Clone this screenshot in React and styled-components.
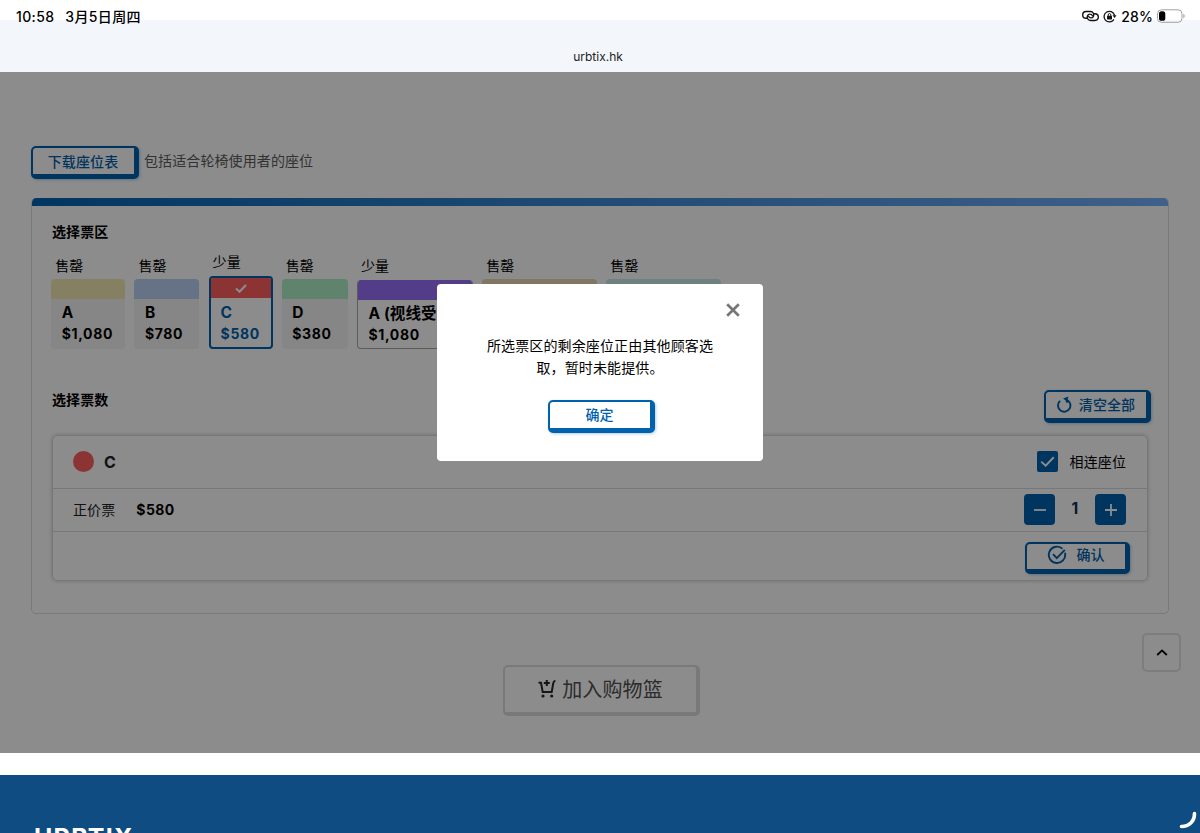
import React from "react";
import styled, { createGlobalStyle } from "styled-components";

const zones = [
   { name: "A", price: "$1,080", status: "售罄", color: "#f4e9b4", width: 74 },
   { name: "B", price: "$780", status: "售罄", color: "#bbd2f4", width: 65 },
   {
      name: "C",
      price: "$580",
      status: "少量",
      color: "#ff6060",
      width: 64,
      selected: true,
   },
   { name: "D", price: "$380", status: "售罄", color: "#aeeec6", width: 66 },
   {
      name: "A (视线受阻)",
      price: "$1,080",
      status: "少量",
      color: "#986df8",
      width: 116,
      open: true,
   },
   { status: "售罄", color: "#ecd8b2", width: 115 },
   { status: "售罄", color: "#c8ece6", width: 115 },
];

const StatusIcons = () => (
   <StatusRight>
      <svg width='17' height='12' viewBox='0 0 17 12' fill='none' stroke='#111' strokeWidth='1.4' strokeLinecap='round'>
         <path d='M4.6 8.3H4.1a3.4 3.4 0 0 1 0-6.8h4.3a3.4 3.4 0 0 1 2.9 5.2 2.6 2.6 0 0 1-2.3 1.2c-1.2 0-2-.5-2.3-1.5' />
         <path d='M12.4 3.7h.5a3.4 3.4 0 0 1 0 6.8H8.6a3.4 3.4 0 0 1-2.9-5.2A2.6 2.6 0 0 1 8 4.1c1.2 0 2 .5 2.3 1.5' />
      </svg>
      <svg width='14' height='13' viewBox='0 0 14 13' fill='none' stroke='#111' strokeWidth='1.3'>
         <path d='M10.6 9.8A5.3 5.3 0 1 1 11.4 5' strokeLinecap='round' />
         <path d='M9.5 5.2h4l-1.9 2.8z' fill='#111' stroke='none' />
         <rect x='4' y='5.8' width='5' height='3.6' rx='.6' fill='#111' stroke='none' />
         <path d='M5.2 6V4.9a1.3 1.3 0 0 1 2.6 0V6' strokeWidth='1' />
      </svg>
      <Percent>28%</Percent>
      <svg width='28' height='14' viewBox='0 0 28 14' fill='none'>
         <rect x='.5' y='.8' width='24.5' height='12.5' rx='4' stroke='#a2a2a2' />
         <rect x='2' y='2.3' width='6.3' height='9.5' rx='2.6' fill='#000' />
         <path d='M26.3 5c1.8.6 1.8 3.500 0 4.100z' fill='#a2a2a2' />
      </svg>
   </StatusRight>
);

const Check = ({ width = 12, weight = 1.8 }) => (
   <svg width={width} height={width * 0.75} viewBox='0 0 12 9' fill='none' stroke='#fff' strokeWidth={weight}>
      <path d='M1 4.5 4.5 7.8 11 1' />
   </svg>
);

const ResetIcon = () => (
   <svg width='16' height='17' viewBox='0 0 16 17' fill='none' stroke='#0061ad' strokeWidth='1.9'>
      <path d='M2.6 5.4A6.2 6.2 0 1 0 10 4' strokeLinecap='round' />
      <path d='M6 2.600 11.500 .4 10.600 3.400 11.600 6.400 9.200 6.800 8.600 4.600z' fill='#0061ad' stroke='none' />
   </svg>
);

const ConfirmIcon = () => (
   <svg width='20' height='20' viewBox='0 0 20 20' fill='none' stroke='#0061ad' strokeWidth='1.9'>
      <path d='M14.8 3.2A8.2 8.2 0 1 0 18.1 8.5' strokeLinecap='round' />
      <path d='m6 9.2 3.8 3.9 8-8.3' />
   </svg>
);

const CartIcon = () => (
   <svg width='18' height='19' viewBox='0 0 18 19' fill='none' stroke='#2b2b2b' strokeWidth='2'>
      <path d='M.5 3.8H3l1.7 9.2h9l1.5-8.5c.2-1.6.8-2.5 2.2-2.9' />
      <path d='M8.8 1v6M5.8 4h6' />
      <circle cx='5' cy='17' r='1.6' fill='#2b2b2b' stroke='none' />
      <circle cx='13.7' cy='17' r='1.6' fill='#2b2b2b' stroke='none' />
   </svg>
);

const Zone = ({ zone }) => (
   <ZoneItem $width={zone.width}>
      <ZoneStatus $raised={zone.selected || zone.open}>
         {zone.status}
      </ZoneStatus>
      <ZoneCard $selected={zone.selected} $open={zone.open}>
         <ZoneColor $color={zone.color}>
            {zone.selected && <Check weight={2} />}
         </ZoneColor>
         {zone.name && (
            <ZoneInfo $selected={zone.selected}>
               <ZoneName>{zone.name}</ZoneName>
               <ZonePrice>{zone.price}</ZonePrice>
            </ZoneInfo>
         )}
      </ZoneCard>
   </ZoneItem>
);

const App = () => {
   return (
      <>
         <GlobalStyle />
         <Screen>
            <StatusBar>
               <StatusLeft>
                  <span>10:58</span>
                  <span>3月5日周四</span>
               </StatusLeft>
               <StatusIcons />
            </StatusBar>
            <AddressBar>urbtix.hk</AddressBar>
            <Main>
               <SeatPlan>
                  <OutlineButton $width={108} $height={33}>
                     下载座位表
                  </OutlineButton>
                  <SeatNote>包括适合轮椅使用者的座位</SeatNote>
               </SeatPlan>
               <Panel>
                  <Heading>选择票区</Heading>
                  <Zones>
                     {zones.map((zone, index) => (
                        <Zone key={index} zone={zone} />
                     ))}
                  </Zones>
                  <QuantityHeader>
                     <Heading>选择票数</Heading>
                     <OutlineButton $width={107} $height={33} $gap={6}>
                        <ResetIcon />
                        清空全部
                     </OutlineButton>
                  </QuantityHeader>
                  <Table>
                     <Row $height={52}>
                        <Dot />
                        <RowZone>C</RowZone>
                        <Adjacent>
                           <Checkbox>
                              <Check width={15} weight={1.5} />
                           </Checkbox>
                           相连座位
                        </Adjacent>
                     </Row>
                     <Row $height={43}>
                        <TicketType>正价票</TicketType>
                        <RowPrice>$580</RowPrice>
                        <Stepper>
                           <StepButton>
                              <svg width='14' height='14' stroke='#fff' strokeWidth='1.8'>
                                 <path d='M1 7h12' />
                              </svg>
                           </StepButton>
                           <Quantity>1</Quantity>
                           <StepButton>
                              <svg width='14' height='14' stroke='#fff' strokeWidth='1.8'>
                                 <path d='M1 7h12M7 1v12' />
                              </svg>
                           </StepButton>
                        </Stepper>
                     </Row>
                     <ConfirmRow>
                        <OutlineButton $width={105} $height={32} $gap={9}>
                           <ConfirmIcon />
                           确认
                        </OutlineButton>
                     </ConfirmRow>
                  </Table>
               </Panel>
               <CartButton>
                  <CartIcon />
                  加入购物篮
               </CartButton>
               <BackToTop>
                  <svg width='12' height='7' viewBox='0 0 12 7' fill='none' stroke='#000' strokeWidth='1.8'>
                     <path d='M1.2 6 6 1.4 10.8 6' />
                  </svg>
               </BackToTop>
               <Overlay>
                  <Dialog>
                     <CloseButton>
                        <svg width='14' height='14' viewBox='0 0 14 14' stroke='#767676' strokeWidth='2.7'>
                           <path d='M1.2 1.2 12.8 12.8M12.8 1.2 1.2 12.8' />
                        </svg>
                     </CloseButton>
                     <Message>
                        所选票区的剩余座位正由其他顾客选
                        <br />
                        取，暂时未能提供。
                     </Message>
                     <OutlineButton $width={107} $height={33}>
                        确定
                     </OutlineButton>
                  </Dialog>
               </Overlay>
            </Main>
            <Footer>
               <Logo>URBTIX</Logo>
               <Spinner width='19' height='18' viewBox='0 0 19 18' fill='none' stroke='#fff' strokeWidth='3.6' strokeLinecap='round'>
                  <path d='M2.5 15.5C10 15.5 15.5 10.5 15.5 2.5' />
               </Spinner>
            </Footer>
         </Screen>
      </>
   );
};

export default App;

const GlobalStyle = createGlobalStyle`
   * {
      box-sizing: border-box;
   }
   body {
      margin: 0;
      overflow: hidden;
      background: #fff;
      color: #000;
      font-family: Inter, "Noto Sans CJK SC", sans-serif;
      font-size: 14px;
      letter-spacing: 0.1px;
   }
   svg {
      display: block;
      flex: none;
   }
   button {
      font: inherit;
      letter-spacing: inherit;
      padding: 0;
   }
`;

const Screen = styled.div`
   display: flex;
   flex-direction: column;
   width: 1200px;
   height: 833px;
   overflow: hidden;
`;

const StatusBar = styled.header`
   display: flex;
   justify-content: space-between;
   height: 32px;
   padding: 0 15px 0 16px;
   line-height: 33px;
   font-weight: 500;
   background: linear-gradient(#fff 20px, #f3f6fb 20px);
`;

const StatusLeft = styled.div`
   display: flex;
   gap: 11px;
   letter-spacing: 0.35px;
`;

const StatusRight = styled.div`
   display: flex;
   align-items: center;
   gap: 5px;
   height: 32px;

   svg:first-child {
      margin-right: -1px;
   }
`;

const Percent = styled.span`
   margin: 0 -1px 0 -1px;
`;

const AddressBar = styled.div`
   height: 40px;
   padding-right: 4px;
   background: #f3f6fb;
   text-align: center;
   font-size: 12px;
   letter-spacing: 0;
   line-height: 50px;
   color: #222;
`;

const Main = styled.main`
   position: relative;
   display: flex;
   flex-direction: column;
   height: 681px;
   padding: 74px 31px 0;
`;

const OutlineButton = styled.button`
   display: flex;
   align-items: center;
   justify-content: center;
   flex: none;
   gap: ${(props) => props.$gap || 0}px;
   width: ${(props) => props.$width}px;
   height: ${(props) => props.$height}px;
   padding: 0 0 1px;
   border: solid #0061ad;
   border-width: 2px 5px 5px 2px;
   border-radius: 5px;
   background: #fff;
   box-shadow: 1px 1px 3px rgba(0, 97, 173, 0.3);
   color: #0061ad;
   font-weight: 500;
   line-height: 20px;
`;

const SeatPlan = styled.div`
   display: flex;
   gap: 5px;
   height: 52px;

   ${OutlineButton} {
      padding: 2px 1px 0 0;
   }
`;

const SeatNote = styled.span`
   line-height: 29px;
   color: #5c5c5c;
`;

const Panel = styled.section`
   height: 416px;
   padding: 16px 17px 0 20px;
   border: 1px solid #d9dde3;
   border-top: 0;
   border-radius: 5px;
   background: linear-gradient(90deg, #0463b2, #74b0f8) 0 0 / 100% 8px no-repeat border-box;
`;

const Heading = styled.h2`
   margin: 0;
   font-size: 14px;
   font-weight: 700;
   line-height: 35px;
`;

const Zones = styled.div`
   display: flex;
   align-items: flex-end;
   gap: 9.2px;
   height: 100px;
   margin-left: -0.8px;
`;

const ZoneItem = styled.div`
   flex: none;
   width: ${(props) => props.$width}px;
`;

const ZoneStatus = styled.div`
   padding-left: 4px;
   line-height: ${(props) => (props.$raised ? 28 : 26)}px;
`;

const cardHeight = ({ $selected, $open }) => {
   if ($selected) return 73;
   return $open ? 69 : 70;
};

const ZoneCard = styled.div`
   height: ${cardHeight}px;
   overflow: hidden;
   border-style: solid;
   border-color: ${(props) => (props.$selected ? "#0061ad" : "#a8a8a8")};
   border-width: ${(props) =>
      props.$selected ? "2px" : props.$open ? "0 1px 1px" : "0"};
   border-radius: 4px;
   background: ${(props) =>
      props.$selected || props.$open ? "#fff" : "#f4f4f4"};
`;

const ZoneColor = styled.div`
   display: flex;
   align-items: center;
   justify-content: center;
   height: 20px;
   background: ${(props) => props.$color};
`;

const ZoneInfo = styled.div`
   padding: ${(props) => (props.$selected ? "4px 0 0 10px" : "3px 0 0 10.5px")};
   color: ${(props) => (props.$selected ? "#0061ad" : "#000")};
   font-weight: 700;
   white-space: nowrap;
`;

const ZoneName = styled.div`
   font-size: 15.5px;
   line-height: 21px;
`;

const ZonePrice = styled.div`
   font-size: 14px;
   letter-spacing: 0.65px;
   line-height: 21px;
`;

const QuantityHeader = styled.div`
   display: flex;
   justify-content: space-between;
   height: 45px;
   margin-top: 41px;

   ${Heading} {
      line-height: 20px;
   }
`;

const Table = styled.div`
   width: 1096px;
   height: 146px;
   border: 1px solid #d9d9db;
   border-radius: 5px;
   box-shadow: 0 0 4px rgba(0, 0, 0, 0.2);
`;

const Row = styled.div`
   display: flex;
   align-items: center;
   height: ${(props) => props.$height + 0.5}px;
   padding: 0 21px 0 20px;
   border-bottom: 1px solid #d9d9db;
`;

const TicketType = styled.span`
   padding-bottom: 2px;
   color: #222;
`;

const ConfirmRow = styled.div`
   display: flex;
   justify-content: flex-end;
   padding: 10px 17px 0 0;

   ${OutlineButton} {
      padding-bottom: 3px;
   }
`;

const Dot = styled.i`
   width: 21px;
   height: 21px;
   border-radius: 50%;
   background: #ff6060;
`;

const RowZone = styled.span`
   margin-left: 10px;
   font-size: 16px;
   font-weight: 700;
   color: #222;
`;

const RowPrice = styled.b`
   margin-left: 21px;
   letter-spacing: 0.4px;
`;

const Adjacent = styled.label`
   display: flex;
   align-items: center;
   gap: 11.5px;
   margin-left: auto;
   line-height: 20px;
`;

const Checkbox = styled.span`
   display: flex;
   align-items: center;
   justify-content: center;
   width: 21px;
   height: 21px;
   border-radius: 2px;
   background: #0061ad;
`;

const Stepper = styled.div`
   display: flex;
   align-items: center;
   margin-left: auto;
`;

const StepButton = styled.button`
   display: flex;
   align-items: center;
   justify-content: center;
   width: 31px;
   height: 31px;
   border: 0;
   border-radius: 4px;
   background: #0061ad;
`;

const Quantity = styled.span`
   width: 40px;
   padding-bottom: 2px;
   text-align: center;
   font-size: 15.5px;
   font-weight: 700;
   color: #0d3058;
`;

const CartButton = styled.button`
   display: flex;
   align-items: center;
   justify-content: center;
   gap: 6px;
   width: 197px;
   height: 51px;
   margin: 51px 0 0 472px;
   padding-bottom: 2px;
   border: solid #dcdcdc;
   border-width: 2px 4px 4px 2px;
   border-radius: 5px;
   background: #fff;
   color: #505050;
   font-size: 20px;
`;

const BackToTop = styled.button`
   position: absolute;
   right: 19px;
   bottom: 81px;
   display: flex;
   align-items: center;
   justify-content: center;
   width: 39px;
   height: 39px;
   border: 2px solid #e4e4e4;
   border-radius: 5px;
   background: #fff;
`;

const Overlay = styled.div`
   position: absolute;
   inset: 0;
   display: flex;
   align-items: flex-start;
   justify-content: center;
   padding-top: 212px;
   background: rgba(0, 0, 0, 0.45);
`;

const Dialog = styled.div`
   display: flex;
   flex-direction: column;
   align-items: center;
   width: 326px;
   height: 177px;
   padding: 19px 23px 0 25px;
   border-radius: 4px;
   background: #fff;

   ${OutlineButton} {
      padding-bottom: 0;
   }
`;

const CloseButton = styled.button`
   align-self: flex-end;
   border: 0;
   background: none;
`;

const Message = styled.p`
   margin: 18px 2px 21px 0;
   text-align: center;
   line-height: 22px;
   white-space: nowrap;
   letter-spacing: 0.13px;
`;

const Footer = styled.footer`
   position: relative;
   flex: none;
   height: 58px;
   margin-top: 22px;
   padding: 48px 0 0 34px;
   background: #0f4c81;
   overflow: hidden;
`;

const Logo = styled.div`
   color: #fff;
   font-size: 25px;
   font-weight: 700;
   letter-spacing: 1.3px;
   line-height: 30px;
`;

const Spinner = styled.svg`
   position: absolute;
   right: 2px;
   top: 36px;
`;
